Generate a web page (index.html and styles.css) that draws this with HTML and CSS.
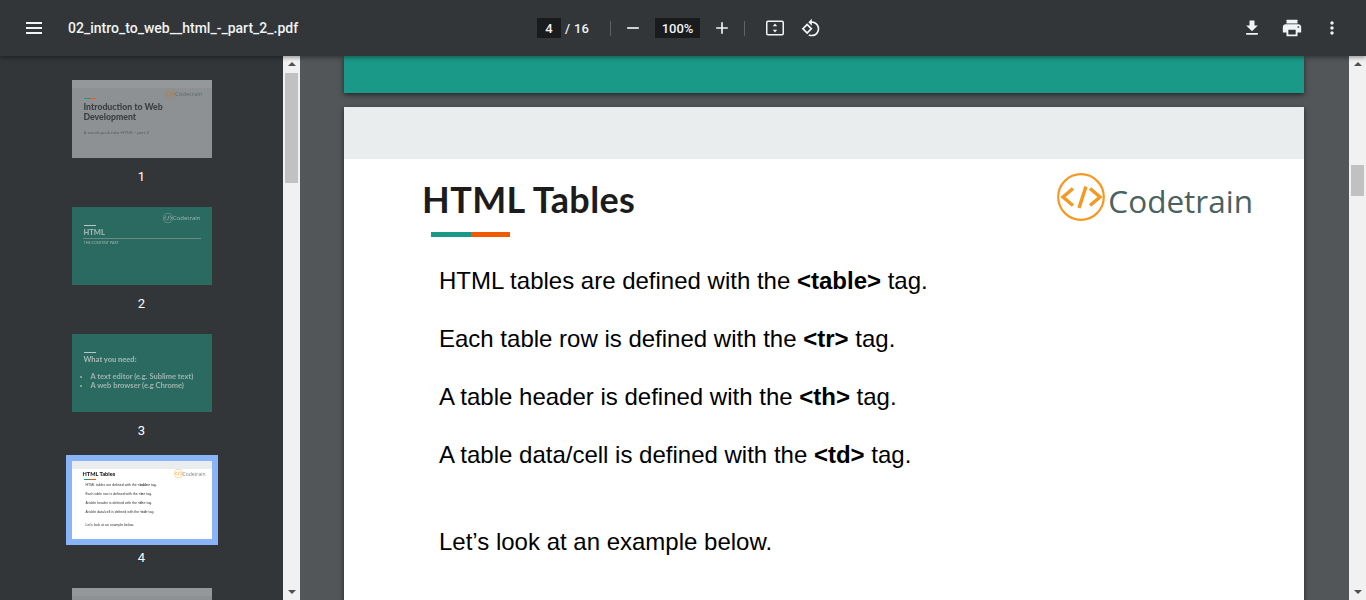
FILE: index.html
```html
<!DOCTYPE html>
<html lang="en">
<head>
<meta charset="utf-8">
<title>02_intro_to_web__html_-_part_2_.pdf</title>
<link rel="stylesheet" href="styles.css">
</head>
<body>
<svg class="defs" width="0" height="0" aria-hidden="true">
  <symbol id="logo-mark" viewBox="0 0 48 48">
    <circle class="mark-line mark-ring" cx="24" cy="24" r="22.800"/>
    <path class="mark-line mark-glyph" d="M16 15.500 6 24l10 8.500M33 15.500 43 24l-10 8.500M29 13.500 22 35"/>
  </symbol>
</svg>
<header class="toolbar">
  <div class="tb-left">
    <svg class="ic ic-menu" viewBox="0 0 16 12"><path d="M0 0h16v2H0zM0 5h16v2H0zM0 10h16v2H0z"/></svg>
    <span class="filename">02_intro_to_web__html_-_part_2_.pdf</span>
  </div>
  <div class="tb-center">
    <span class="num-box page-box">4</span>
    <span class="page-total">/ 16</span>
    <span class="divider div-a"></span>
    <svg class="ic ic-minus" viewBox="0 0 24 24"><path d="M19 13H5v-2h14v2z"/></svg>
    <span class="num-box zoom-box">100%</span>
    <svg class="ic ic-plus" viewBox="0 0 24 24"><path d="M19 13h-6v6h-2v-6H5v-2h6V5h2v6h6v2z"/></svg>
    <span class="divider div-b"></span>
    <svg class="ic ic-fit" viewBox="0 0 20 16"><rect class="fit-frame" x="1.750" y="1.250" width="16.500" height="13.500" rx="1.200"/><path d="M10 3.600 12.200 6.200H7.800zM10 12.400 12.200 9.800H7.800z"/></svg>
    <svg class="ic ic-rotate" viewBox="0 0 24 24"><path d="M7.340 6.410.860 12.900l6.490 6.480 6.490-6.480-6.500-6.490zM3.690 12.900l3.660-3.660L11 12.900l-3.660 3.660-3.650-3.660zm15.670-6.260C17.610 4.880 15.300 4 13 4V.760L8.760 5 13 9.240V6c1.790 0 3.580.680 4.950 2.050 2.730 2.730 2.730 7.170 0 9.900C16.580 19.320 14.790 20 13 20c-.970 0-1.940-.210-2.840-.610l-1.490 1.490C10.020 21.620 11.510 22 13 22c2.300 0 4.610-.880 6.360-2.640 3.520-3.510 3.520-9.210 0-12.720z"/></svg>
  </div>
  <div class="tb-right">
    <svg class="ic ic-save" viewBox="0 0 24 24"><path d="M19 9h-4V3H9v6H5l7 7 7-7zM5 18v2h14v-2H5z"/></svg>
    <svg class="ic ic-print" viewBox="0 0 24 24"><path d="M19 8H5c-1.660 0-3 1.340-3 3v6h4v4h12v-4h4v-6c0-1.660-1.340-3-3-3zm-3 11H8v-5h8v5zm3-7c-.550 0-1-.450-1-1s.450-1 1-1 1 .450 1 1-.450 1-1 1zm-1-9H6v4h12V3z"/></svg>
    <svg class="ic ic-more" viewBox="0 0 24 24"><path d="M12 8c1.100 0 2-.900 2-2s-.900-2-2-2-2 .900-2 2 .900 2 2 2zm0 2c-1.100 0-2 .900-2 2s.900 2 2 2 2-.900 2-2-.900-2-2-2zm0 6c-1.100 0-2 .900-2 2s.900 2 2 2 2-.900 2-2-.900-2-2-2z"/></svg>
  </div>
</header>
<div class="workspace">
  <aside class="sidebar">
    <div class="thumbs">
      <div class="thumb-item">
        <div class="thumb thumb-light">
          <div class="t-strip"></div>
          <div class="t-logo t1-logo"><svg class="t-mark"><use href="#logo-mark"/></svg><span>Codetrain</span></div>
          <div class="t-bar t-bar-color t1-bar"></div>
          <div class="t1-title">Introduction to Web<br>Development</div>
          <div class="t1-sub">A sneak peek into HTML - part 2</div>
        </div>
        <div class="thumb-label">1</div>
      </div>
      <div class="thumb-item">
        <div class="thumb thumb-teal">
          <div class="t-logo t-logo-pale t2-logo"><svg class="t-mark"><use href="#logo-mark"/></svg><span>Codetrain</span></div>
          <div class="t-bar t-bar-pale t2-bar"></div>
          <div class="t2-title">HTML</div>
          <div class="t2-rule"></div>
          <div class="t2-sub">THE CONTENT PART</div>
        </div>
        <div class="thumb-label">2</div>
      </div>
      <div class="thumb-item">
        <div class="thumb thumb-teal">
          <div class="t-bar t-bar-pale t3-bar"></div>
          <div class="t3-title">What you need:</div>
          <ul class="t3-list"><li>A text editor (e.g. Sublime text)</li><li>A web browser (e.g Chrome)</li></ul>
        </div>
        <div class="thumb-label">3</div>
      </div>
      <div class="thumb-item">
        <div class="thumb thumb-white thumb-selected">
          <div class="t-strip t-strip-white"></div>
          <div class="t-logo t4-logo"><svg class="t-mark t4-mark"><use href="#logo-mark"/></svg><span>Codetrain</span></div>
          <div class="t4-title">HTML Tables</div>
          <div class="t-bar t-bar-color t4-bar"></div>
          <p class="t4-line t4-first">HTML tables are defined with the <b>&lt;table&gt;</b> tag.</p>
          <p class="t4-line">Each table row is defined with the <b>&lt;tr&gt;</b> tag.</p>
          <p class="t4-line">A table header is defined with the <b>&lt;th&gt;</b> tag.</p>
          <p class="t4-line">A table data/cell is defined with the <b>&lt;td&gt;</b> tag.</p>
          <p class="t4-line t4-last">Let’s look at an example below.</p>
        </div>
        <div class="thumb-label">4</div>
      </div>
      <div class="thumb-item">
        <div class="thumb thumb-light"><div class="t-strip"></div></div>
      </div>
    </div>
    <div class="scrollbar">
      <span class="arrow arrow-up"></span>
      <span class="sb-thumb sb-thumb-left"></span>
      <span class="arrow arrow-down"></span>
    </div>
  </aside>
  <main class="viewer">
    <div class="pages">
      <section class="page page-teal"></section>
      <section class="page page-white">
        <div class="page-strip"></div>
        <div class="page-head">
          <div class="page-title-block">
            <h1 class="page-title">HTML Tables</h1>
            <div class="title-bar"><span class="bar-teal"></span><span class="bar-orange"></span></div>
          </div>
          <div class="logo"><svg class="logo-mark"><use href="#logo-mark"/></svg><span class="logo-text">Codetrain</span></div>
        </div>
        <div class="page-body">
          <p class="line">HTML tables are defined with the <b>&lt;table&gt;</b> tag.</p>
          <p class="line">Each table row is defined with the <b>&lt;tr&gt;</b> tag.</p>
          <p class="line">A table header is defined with the <b>&lt;th&gt;</b> tag.</p>
          <p class="line">A table data/cell is defined with the <b>&lt;td&gt;</b> tag.</p>
          <p class="line line-last">Let’s look at an example below.</p>
        </div>
      </section>
    </div>
    <div class="scrollbar">
      <span class="arrow arrow-up"></span>
      <span class="sb-thumb sb-thumb-right"></span>
      <span class="arrow arrow-down"></span>
    </div>
  </main>
</div>
</body>
</html>
```
FILE: styles.css
```css
* { box-sizing: border-box; }
html, body { margin: 0; height: 100%; overflow: hidden; }
body { display: flex; flex-direction: column; background: #525659; font-family: "Roboto", "Liberation Sans", sans-serif; }
.defs { position: absolute; }
.mark-line { fill: none; stroke: var(--mark, #f49a24); }
.mark-ring { stroke-width: 2.200; }
.mark-glyph { stroke-width: 3.500; }

/* toolbar */
.toolbar { position: relative; z-index: 2; flex: none; height: 56px; display: flex; align-items: center; background: #323639; color: #f1f3f4; box-shadow: 0 2px 4px rgba(0,0,0,.35); }
.ic { display: block; flex: none; fill: #f1f3f4; }
.tb-left { width: 537px; display: flex; align-items: center; padding-left: 26px; }
.ic-menu { width: 16px; height: 12px; }
.filename { margin-left: 26px; font-size: 14px; font-weight: 500; white-space: nowrap; line-height: 56px; }
.tb-center { display: flex; align-items: center; font-size: 13px; font-weight: 500; }
.num-box { display: block; background: #191b1c; height: 20px; line-height: 21px; text-align: center; }
.page-box { width: 24px; }
.page-total { width: 25px; margin-left: 4px; letter-spacing: .3px; white-space: nowrap; }
.divider { display: block; width: 1px; height: 15px; background: #5f6368; }
.div-a { margin-left: 20px; }
.ic-minus { width: 20px; height: 20px; margin-left: 12px; }
.zoom-box { width: 45px; margin-left: 12px; }
.ic-plus { width: 20px; height: 20px; margin-left: 12px; }
.div-b { margin-left: 12px; }
.ic-fit { width: 20px; height: 16px; margin-left: 20px; }
.fit-frame { fill: none; stroke: #f1f3f4; stroke-width: 1.500; }
.ic-rotate { width: 20px; height: 20px; margin-left: 16px; }
.tb-right { margin-left: auto; display: flex; align-items: center; padding-right: 24px; }
.ic-save { width: 20px; height: 20px; }
.ic-print { width: 22px; height: 22px; margin-left: 19px; }
.ic-more { width: 20px; height: 20px; margin-left: 19px; }

/* layout */
.workspace { flex: 1; min-height: 0; display: flex; }
.sidebar { flex: none; width: 300px; display: flex; background: #323639; }
.thumbs { flex: 1; padding-top: 24px; overflow: hidden; display: flex; flex-direction: column; align-items: center; }
.thumb-item { flex: none; height: 127px; width: 140px; display: flex; flex-direction: column; align-items: center; }
.thumb-label { margin-top: 10px; font-size: 13px; line-height: 17px; font-weight: 400; color: #fff; }
.viewer { flex: 1; min-width: 0; display: flex; }
.pages { flex: 1; min-width: 0; overflow: hidden; }

/* scrollbars */
.scrollbar { flex: none; width: 17px; display: flex; flex-direction: column; align-items: center; background: #f1f1f1; }
.arrow { flex: none; width: 0; height: 0; border-left: 4px solid transparent; border-right: 4px solid transparent; }
.arrow-up { margin-top: 6px; border-bottom: 4px solid #505050; }
.sb-thumb { flex: none; width: 13px; background: #c1c1c1; }
.sb-thumb-left { height: 110px; margin-top: 7px; }
.sb-thumb-right { height: 31px; margin-top: 99px; }
.arrow-down { margin-top: auto; margin-bottom: 6px; border-top: 4px solid #505050; }

/* thumbnails */
.thumb { flex: none; position: relative; width: 140px; height: 78px; overflow: hidden; font-family: "Lato", "Liberation Sans", sans-serif; }
.thumb-light { background: #8e9193; color: #3c4042; --mark: #b5793a; }
.thumb-teal { background: #2a6a60; color: #9fb5b0; --mark: #9fb7b2; }
.thumb-white { background: #fff; color: #333; }
.thumb-selected { overflow: visible; box-shadow: 0 0 0 6px #8ab4f8; }
.t-strip { height: 8px; background: #95989a; }
.t-strip-white { background: #e9eded; }
.t-bar { height: 1px; width: 12px; }
.t-bar-color { background: linear-gradient(90deg, #1a9988 50%, #f05a00 50%); }
.t-bar-pale { background: #b6c9c5; }
.t-logo { position: absolute; right: 9px; display: flex; align-items: center; font: 6px "Open Sans", sans-serif; color: #5f6d6b; filter: blur(.35px); }
.t-logo-pale { color: #9fb7b2; }
.t-mark { width: 10px; height: 10px; flex: none; }
.t1-logo { top: 9px; }
.t2-logo { top: 6px; right: 11px; }
.t4-logo { top: 8px; right: 6px; font-size: 5px; color: #7c8886; }
.t4-mark { width: 9px; height: 9px; }
.t1-bar { margin: 10px 0 0 12px; }
.t1-title { margin: 3px 0 0 12px; font-size: 8.700px; line-height: 10px; font-weight: 900; filter: blur(.3px); }
.t1-sub { margin: 8px 0 0 12px; font-size: 4.600px; line-height: 5px; color: #585c5e; filter: blur(.3px); }
.t2-bar { margin: 18px 0 0 12px; }
.t2-title { margin: 2px 0 0 12px; font-size: 7.500px; line-height: 10px; font-weight: 900; filter: blur(.3px); }
.t2-rule { height: 1px; width: 118px; margin: 0 0 0 11px; background: #6d8a85; }
.t2-sub { margin: 2px 0 0 12px; font-size: 3.700px; line-height: 4px; filter: blur(.3px); }
.t3-bar { margin: 18px 0 0 12px; }
.t3-title { margin: 2px 0 0 12px; font-size: 7.500px; line-height: 10px; font-weight: 900; filter: blur(.3px); }
.t3-list { margin: 7px 0 0; padding: 0 0 0 19px; font-size: 7.500px; line-height: 9px; font-weight: 700; filter: blur(.3px); }
.t4-title { margin: 1px 0 0 11px; font-size: 5.600px; line-height: 8px; font-weight: 900; color: #222; filter: blur(.3px); }
.t4-bar { margin: 1px 0 0 12px; }
.t4-line { margin: 4px 0 0 14px; font: 3.500px/5px "Liberation Sans", sans-serif; color: #333; white-space: nowrap; filter: blur(.3px); }
.t4-first { margin-top: 2.500px; }
.t4-last { margin-top: 8px; }

/* pdf pages */
.page { width: 960px; margin-left: 44px; box-shadow: 0 2px 5px rgba(0,0,0,.55); }
.page-teal { height: 37px; background: #1a9988; }
.page-white { height: 600px; margin-top: 14px; background: #fff; }
.page-strip { height: 52px; background: #e9eded; }
.page-head { display: flex; justify-content: space-between; padding: 14px 51px 0 78px; }
.page-title { margin: 6px 0 0; font: 700 36px/40px "Lato", "Liberation Sans", sans-serif; color: #1c1c1c; letter-spacing: .4px; white-space: nowrap; }
.title-bar { display: flex; height: 5px; margin: 13px 0 0 9px; }
.bar-teal { width: 40px; background: #1a9988; }
.bar-orange { width: 39px; background: #f05a00; }
.logo { display: flex; align-items: center; height: 48px; }
.logo-mark { width: 48px; height: 48px; flex: none; }
.logo-text { margin-left: 3px; font: 31.500px/48px "Open Sans", sans-serif; color: #4a615e; padding-top: 8px; }
.page-body { padding: 29px 0 0 95px; }
.line { margin: 0 0 29px; font: 24px/29px "Liberation Sans", Arial, sans-serif; color: #000; white-space: nowrap; }
.line-last { margin-top: 58px; }
```
